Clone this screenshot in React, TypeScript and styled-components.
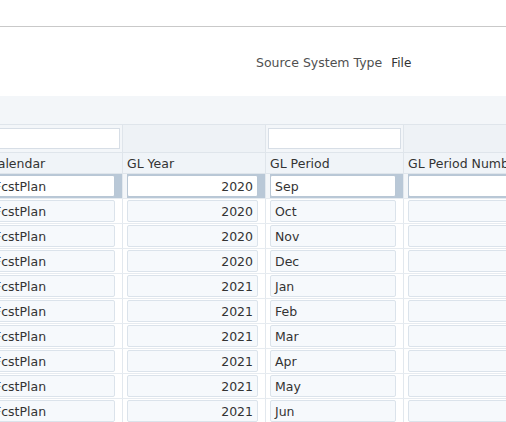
import React from 'react';
import styled, { createGlobalStyle } from 'styled-components';

const GlobalStyle = createGlobalStyle`
  html, body {
    margin: 0;
    padding: 0;
    background: #ffffff;
    font-family: "DejaVu Sans", "Liberation Sans", sans-serif;
    font-size: 12.5px;
    color: #333333;
  }
`;

type Row = { calendar: string; year: string; period: string; num: string };

const months = ['Sep', 'Oct', 'Nov', 'Dec', 'Jan', 'Feb', 'Mar', 'Apr', 'May', 'Jun'];
const rows: Row[] = months.map((m, i) => ({
  calendar: 'FcstPlan',
  year: i < 4 ? '2020' : '2021',
  period: m,
  num: '',
}));

// widths of the four visible columns (first one is scrolled partly out of view)
const cols = [138, 143, 138, 160];

const App = () => {
  return (
    <>
      <GlobalStyle />
      <Page>
        <TopBar />
        <InfoRow>
          <InfoLabel>Source System Type</InfoLabel>
          <InfoValue>File</InfoValue>
        </InfoRow>
        <Band />
        <GridViewport>
          <Grid>
            <FilterRow>
              <FilterCell w={cols[0]}>
                <FilterInput />
              </FilterCell>
              <FilterCell w={cols[1]} dim />
              <FilterCell w={cols[2]}>
                <FilterInput />
              </FilterCell>
              <FilterCell w={cols[3]} dim />
            </FilterRow>
            <HeaderRow>
              <HeaderCell w={cols[0]}>Calendar</HeaderCell>
              <HeaderCell w={cols[1]}>GL Year</HeaderCell>
              <HeaderCell w={cols[2]}>GL Period</HeaderCell>
              <HeaderCell w={cols[3]}>GL Period Number</HeaderCell>
            </HeaderRow>
            {rows.map((r, i) => (
              <DataRow key={i}>
                <Cell w={cols[0]} selected={i === 0}>
                  <Field selected={i === 0}>{r.calendar}</Field>
                </Cell>
                <Cell w={cols[1]} selected={i === 0}>
                  <Field selected={i === 0} right>
                    {r.year}
                  </Field>
                </Cell>
                <Cell w={cols[2]} selected={i === 0}>
                  <Field selected={i === 0}>{r.period}</Field>
                </Cell>
                <Cell w={cols[3]} selected={i === 0}>
                  <Field selected={i === 0}>{r.num}</Field>
                </Cell>
              </DataRow>
            ))}
          </Grid>
        </GridViewport>
      </Page>
    </>
  );
};

const Page = styled.div`
  width: 506px;
  height: 422px;
  overflow: hidden;
  display: flex;
  flex-direction: column;
`;

const TopBar = styled.div`
  height: 26px;
  border-bottom: 1px solid #c9c9c9;
  flex-shrink: 0;
`;

const InfoRow = styled.div`
  height: 69px;
  display: flex;
  align-items: center;
  padding-left: 256px;
  padding-top: 2px;
  box-sizing: border-box;
  gap: 9px;
  flex-shrink: 0;
`;

const InfoLabel = styled.span`
  color: #505050;
`;

const InfoValue = styled.span`
  color: #333333;
  font-size: 12px;
`;

const Band = styled.div`
  height: 28px;
  background: #f3f6f9;
  flex-shrink: 0;
`;

const GridViewport = styled.div`
  overflow: hidden;
  flex: 1;
  background: #f3f6f9;
`;

// the grid is scrolled horizontally, so its first column starts left of the view
const Grid = styled.div`
  margin-left: -15px;
  display: flex;
  flex-direction: column;
  border-top: 1px solid #dfe5eb;
`;

const FilterRow = styled.div`
  display: flex;
  height: 27px;
  border-bottom: 1px solid #dfe5eb;
`;

const FilterCell = styled.div<{ w: number; dim?: boolean }>`
  width: ${(p) => p.w}px;
  flex-shrink: 0;
  box-sizing: border-box;
  padding: 3px 2px 3px 2px;
  border-right: 1px solid #dfe5eb;
  background: ${(p) => (p.dim ? '#eef2f6' : '#f3f6f9')};
`;

const FilterInput = styled.div`
  height: 21px;
  box-sizing: border-box;
  background: #ffffff;
  border: 1px solid #d7dee6;
`;

const HeaderRow = styled.div`
  display: flex;
  height: 20px;
  border-bottom: 1px solid #dfe5eb;
  background: #f0f4f8;
`;

const HeaderCell = styled.div<{ w: number }>`
  width: ${(p) => p.w}px;
  flex-shrink: 0;
  box-sizing: border-box;
  padding: 0 4px;
  border-right: 1px solid #dfe5eb;
  display: flex;
  align-items: center;
  white-space: nowrap;
  overflow: hidden;
  color: #333333;
`;

const DataRow = styled.div`
  display: flex;
  height: 25px;
  box-sizing: border-box;
  border-bottom: 1px solid #e6ebf0;
`;

const Cell = styled.div<{ w: number; selected?: boolean }>`
  width: ${(p) => p.w}px;
  flex-shrink: 0;
  box-sizing: border-box;
  padding: 1px 7px 1px 4px;
  border-right: 1px solid #e2e8ee;
  background: ${(p) => (p.selected ? '#b9c8d7' : '#ffffff')};
  box-shadow: ${(p) => (p.selected ? 'inset 4px 0 0 #f3f6f9' : 'none')};
`;

const Field = styled.div<{ selected?: boolean; right?: boolean }>`
  height: 22px;
  box-sizing: border-box;
  border: 1px solid ${(p) => (p.selected ? '#b9c7d5' : '#dbe3eb')};
  border-radius: 2px;
  background: ${(p) => (p.selected ? '#ffffff' : '#f6f9fc')};
  display: flex;
  align-items: center;
  justify-content: ${(p) => (p.right ? 'flex-end' : 'flex-start')};
  padding: 0 4px;
  white-space: nowrap;
  overflow: hidden;
  color: #333333;
`;

export default App;
